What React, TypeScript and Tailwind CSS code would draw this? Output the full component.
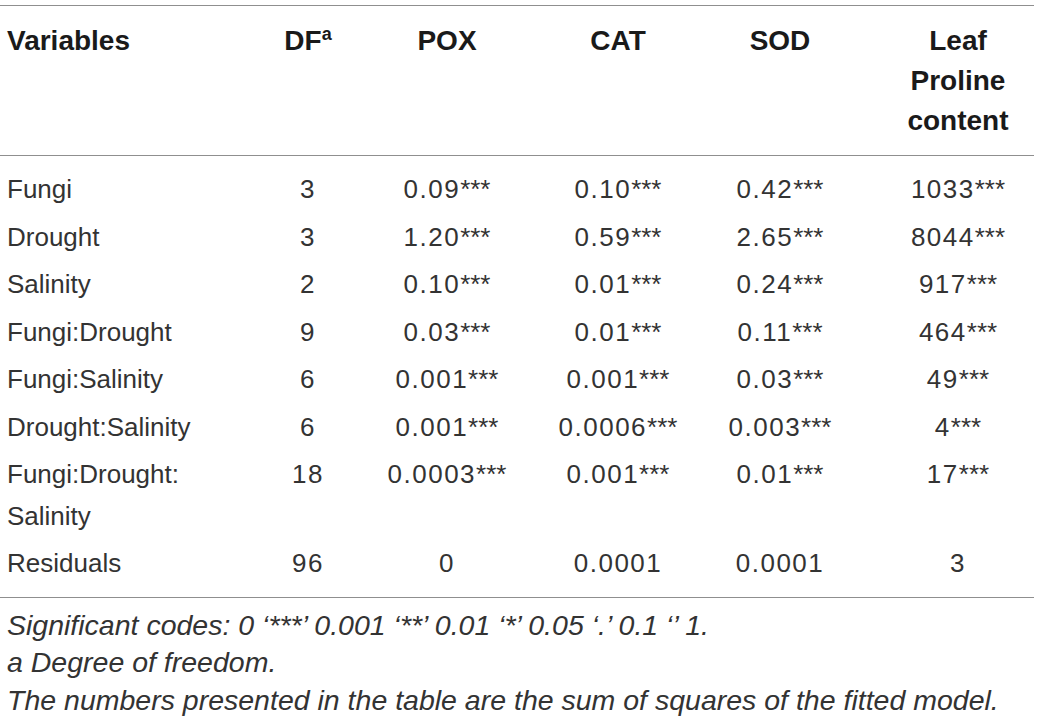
const rows: { label: string[]; df: string; vals: string[] }[] = [
  { label: ['Fungi'], df: '3', vals: ['0.09***', '0.10***', '0.42***', '1033***'] },
  { label: ['Drought'], df: '3', vals: ['1.20***', '0.59***', '2.65***', '8044***'] },
  { label: ['Salinity'], df: '2', vals: ['0.10***', '0.01***', '0.24***', '917***'] },
  { label: ['Fungi:Drought'], df: '9', vals: ['0.03***', '0.01***', '0.11***', '464***'] },
  { label: ['Fungi:Salinity'], df: '6', vals: ['0.001***', '0.001***', '0.03***', '49***'] },
  { label: ['Drought:Salinity'], df: '6', vals: ['0.001***', '0.0006***', '0.003***', '4***'] },
  { label: ['Fungi:Drought:', 'Salinity'], df: '18', vals: ['0.0003***', '0.001***', '0.01***', '17***'] },
  { label: ['Residuals'], df: '96', vals: ['0', '0.0001', '0.0001', '3'] },
]

const cols = 'grid grid-cols-[280px_56px_222px_120px_204px_152px]'

function Val({ v }: { v: string }) {
  const stars = v.endsWith('***')
  const base = stars ? v.slice(0, -3) : v
  return (
    <span>
      <span className="tracking-[1.5px]">{base}</span>
      {stars && <span>***</span>}
    </span>
  )
}

function Cell({ children }: { children: React.ReactNode }) {
  return <div className="flex justify-center whitespace-nowrap">{children}</div>
}

export default function App() {
  return (
    <div
      className="w-[1040px] h-[721px] bg-white overflow-hidden"
      style={{ fontFamily: '"Liberation Sans", Arial, sans-serif' }}
    >
      <div className="w-[1034px] border-t border-[#8f8f8f] mt-[5px]">
        <div className={`${cols} pt-[15px] pb-[14px] text-[28px] leading-[40px] font-bold text-[#1a1a1a] border-b border-[#8f8f8f]`}>
          <div className="pl-[7px]">Variables</div>
          <Cell>
            <span>
              DF<span className="relative -top-[10px] text-[18px]">a</span>
            </span>
          </Cell>
          <Cell>POX</Cell>
          <Cell>CAT</Cell>
          <Cell>SOD</Cell>
          <div className="text-center">
            Leaf
            <br />
            Proline
            <br />
            content
          </div>
        </div>

        <div className="pt-[10px] pb-[9px] border-b border-[#8f8f8f] text-[26px] leading-[41.5px] text-[#333]">
          {rows.map((r) => (
            <div key={r.label.join('')} className={`${cols} py-[3px]`}>
              <div className="pl-[7px] whitespace-nowrap">
                {r.label.map((l) => (
                  <div key={l}>{l}</div>
                ))}
              </div>
              <Cell>
                <span className="tracking-[1.5px]">{r.df}</span>
              </Cell>
              {r.vals.map((v, i) => (
                <Cell key={i}>
                  <Val v={v} />
                </Cell>
              ))}
            </div>
          ))}
        </div>
      </div>

      <div className="pl-[7px] pt-[9px] text-[28.5px] leading-[37.5px] italic text-[#333]">
        <div>Significant codes: 0 ‘***’ 0.001 ‘**’ 0.01 ‘*’ 0.05 ‘.’ 0.1 ‘’ 1.</div>
        <div>a Degree of freedom.</div>
        <div>The numbers presented in the table are the sum of squares of the fitted model.</div>
      </div>
    </div>
  )
}
